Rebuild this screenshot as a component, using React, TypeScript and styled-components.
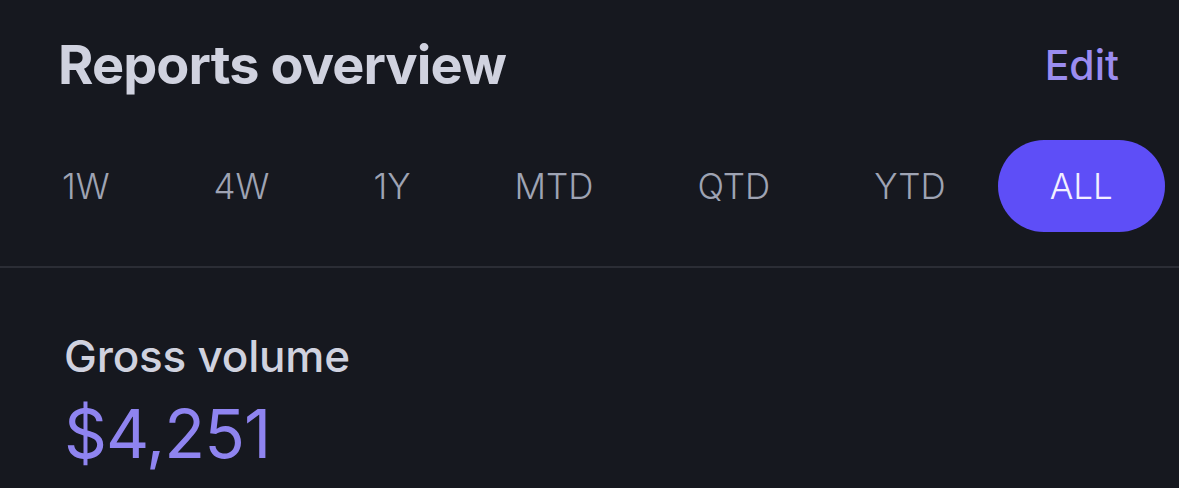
import { useState } from 'react'
import styled, { createGlobalStyle } from 'styled-components'

const GlobalStyle = createGlobalStyle`
  html, body {
    margin: 0;
    padding: 0;
    background: #16181f;
  }
  body {
    font-family: Inter, "Noto Sans", sans-serif;
    -webkit-font-smoothing: antialiased;
  }
`

const Screen = styled.div`
  width: 1179px;
  height: 488px;
  background: #16181f;
  overflow: hidden;
`

const Header = styled.div`
  display: flex;
  align-items: center;
  justify-content: space-between;
  padding: 32px 60px 0 58px;
  height: 66px;
`

const Title = styled.h1`
  margin: 0;
  font-size: 54px;
  line-height: 66px;
  font-weight: 700;
  color: #d0d2df;
  letter-spacing: -0.9px;
`

const EditButton = styled.button`
  border: none;
  background: none;
  padding: 0;
  font-family: inherit;
  font-size: 41px;
  font-weight: 500;
  color: #9b8cf0;
  cursor: pointer;
`

const Tabs = styled.div`
  display: flex;
  align-items: center;
  padding: 42px 0 34px 10px;
  border-bottom: 2px solid #2b2d35;
`

const Tab = styled.button<{ $active?: boolean }>`
  border: none;
  height: 92px;
  padding: 0 52px;
  border-radius: 46px;
  font-family: inherit;
  font-size: 35px;
  font-weight: 300;
  color: ${p => (p.$active ? '#f2f0ff' : '#9ea3b3')};
  background: ${p => (p.$active ? '#5e4ef7' : 'transparent')};
  cursor: pointer;
`

const Metric = styled.div`
  padding: 62px 0 0 64px;
`

const MetricLabel = styled.div`
  font-size: 44px;
  line-height: 52px;
  font-weight: 500;
  color: #d0d2df;
  letter-spacing: -0.2px;
`

const MetricValue = styled.div`
  margin-top: 14px;
  font-size: 67px;
  line-height: 76px;
  font-weight: 400;
  color: #8f84f0;
  letter-spacing: -1px;
`

const ranges = ['1W', '4W', '1Y', 'MTD', 'QTD', 'YTD', 'ALL']

export default function App() {
  const [range, setRange] = useState('ALL')

  return (
    <Screen>
      <GlobalStyle />
      <Header>
        <Title>Reports overview</Title>
        <EditButton>Edit</EditButton>
      </Header>
      <Tabs>
        {ranges.map(r => (
          <Tab key={r} $active={r === range} onClick={() => setRange(r)}>
            {r}
          </Tab>
        ))}
      </Tabs>
      <Metric>
        <MetricLabel>Gross volume</MetricLabel>
        <MetricValue>$4,251</MetricValue>
      </Metric>
    </Screen>
  )
}
